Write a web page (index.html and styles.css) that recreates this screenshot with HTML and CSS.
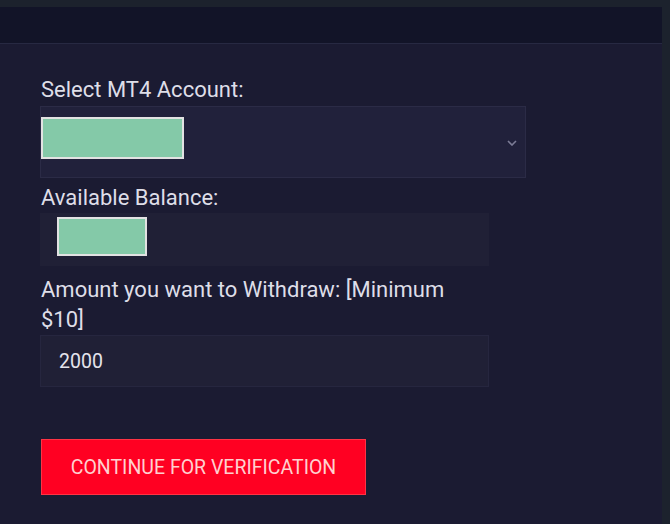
FILE: index.html
```html
<!DOCTYPE html>
<html>
<head>
<meta charset="utf-8">
<link rel="stylesheet" href="styles.css">
</head>
<body>
<div class="page">
  <div class="header"></div>
  <div class="panel">
    <form class="form">
      <label class="label label-first">Select MT4 Account:</label>
      <div class="select">
        <span class="mask mask-account"></span>
        <svg class="chevron" width="10" height="6" viewBox="0 0 10 6"><path d="M1 1l4 4 4-4" fill="none" stroke="#7c7c96" stroke-width="1.6"/></svg>
      </div>
      <label class="label label-balance">Available Balance:</label>
      <div class="field field-balance">
        <span class="mask mask-balance"></span>
      </div>
      <label class="label label-amount">Amount you want to Withdraw: [Minimum $10]</label>
      <div class="field field-amount">2000</div>
      <button type="button" class="btn">CONTINUE FOR VERIFICATION</button>
    </form>
  </div>
</div>
</body>
</html>
```
FILE: styles.css
```css
html, body {
  margin: 0;
  padding: 0;
  background: #1c222d;
  height: 100%;
  overflow: hidden;
}
.page {
  padding-top: 7px;
  width: 662px;
  height: 100%;
  box-sizing: border-box;
  display: flex;
  flex-direction: column;
}
.header {
  height: 36px;
  background: #121428;
  border-bottom: 1px solid #272942;
  flex: none;
}
.panel {
  flex: 1;
  background: #1b1b32;
  padding: 31px 0 0 40px;
}
.form {
  display: flex;
  flex-direction: column;
  align-items: flex-start;
  font-family: Roboto, "Liberation Sans", sans-serif;
}
.label {
  font-size: 22px;
  line-height: 30px;
  color: #dedee8;
  width: 430px;
  padding-left: 1px;
}
.select {
  margin-top: 1px;
  width: 486px;
  height: 72px;
  box-sizing: border-box;
  background: #21213b;
  border: 1px solid #2b2b46;
  display: flex;
  align-items: flex-start;
  position: relative;
}
.mask {
  display: block;
  background: #84c9a8;
  border: 2px solid #e2e2e2;
  box-sizing: border-box;
}
.mask-account {
  width: 143px;
  height: 42px;
  margin-top: 10px;
}
.chevron {
  position: absolute;
  right: 8px;
  top: 33px;
}
.label-balance { margin-top: 5px; }
.field {
  width: 449px;
  box-sizing: border-box;
  background: #202036;
}
.field-balance {
  margin-top: 0;
  height: 53px;
  padding: 4px 0 0 17px;
}
.mask-balance {
  width: 90px;
  height: 39px;
}
.label-amount { margin-top: 9px; }
.field-amount {
  margin-top: 0;
  height: 52px;
  border: 1px solid #26263f;
  padding-left: 18px;
  display: flex;
  align-items: center;
  font-size: 19.5px;
  color: #e4e4ec;
}
.btn {
  margin-top: 52px;
  margin-left: 1px;
  width: 325px;
  height: 56px;
  background: #ff0022;
  border: 1px solid #ff3344;
  color: #ffd0d0;
  font-family: Roboto, "Liberation Sans", sans-serif;
  font-size: 19.5px;
  padding: 0;
  cursor: pointer;
}
```
